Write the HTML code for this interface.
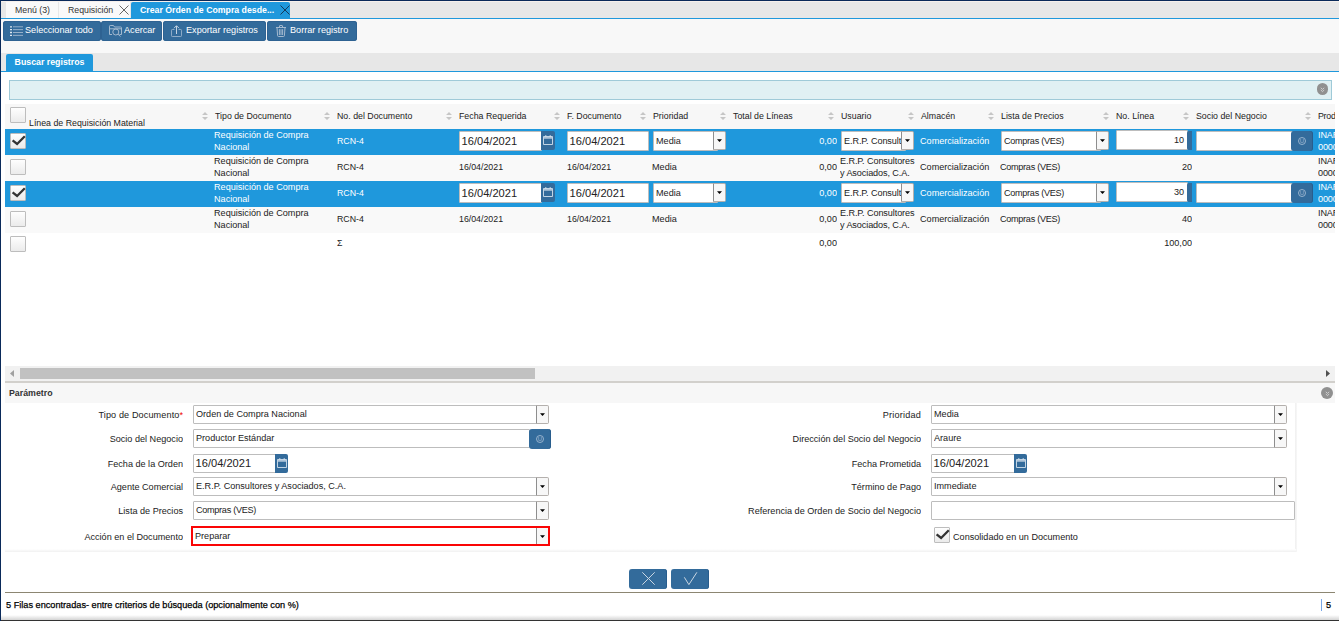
<!DOCTYPE html>
<html lang="es">
<head>
<meta charset="utf-8">
<title>Crear Órden de Compra desde Requisición</title>
<style>
*{box-sizing:border-box;margin:0;padding:0}
html,body{width:1339px;height:621px;overflow:hidden;background:#fff}
body{font-family:"Liberation Sans",sans-serif;font-size:9px;color:#222;position:relative}
div,span{position:absolute;white-space:nowrap}
svg{position:absolute;overflow:visible}
.tab{top:2px;height:16px;line-height:16px;font-size:8.75px;color:#333;background:#f9f9f9}
.btn{top:21px;height:20px;background:#336b9b;border-radius:3px;color:#fff;font-size:9.8px;line-height:19px;box-shadow:inset 0 0 0 1px #2e6292}
.h{top:110px;font-size:8.8px;line-height:12px;color:#222}
.row{left:5px;width:1330px;height:26px}
.sel{background:#1f98dc}
.odd{background:#f9f9f9}
.t{font-size:9.6px;line-height:12px;color:#222;transform:scaleX(.948);transform-origin:0 50%;margin-left:-.7px}
.a{font-size:8.8px;line-height:12px;color:#222}
.w{color:#fff}
.r{text-align:right;transform-origin:100% 50%;margin-left:0}
.cb{left:10px;width:16px;height:16px;background:linear-gradient(#fefefe,#ebebeb);border:1px solid #bdbdbd;border-radius:1px}
.in{background:#fff;border:1px solid #bdbdbd;border-radius:1px;overflow:hidden;color:#222}
.dd{background:#f7f7f7;border:1px solid #b4b0ad;border-left-color:#8e8e8e;border-radius:0 2px 2px 0}
.dd:after,.arr{content:"";position:absolute;left:50%;top:50%;margin:-1.2px 0 0 -2.5px;width:5px;height:2.6px;background:#000;clip-path:polygon(0 0,100% 0,50% 100%)}
.cal{background:#336b9b;border-radius:0 2px 2px 0}
.lbl{font-size:9.6px;line-height:12px;margin-top:.5px;color:#222;text-align:right;transform:scaleX(.948);transform-origin:100% 50%}
.bb{background:#336b9b;border-radius:3px;box-shadow:inset -1px 0 0 #285d8d}
.big{font-size:11.1px;line-height:17px;left:1.6px;top:1px}
.f{font-size:9.6px;line-height:16px;left:2px;top:0;transform:scaleX(.948);transform-origin:0 50%}
.g{left:1.5px}
</style>
</head>
<body>
<div class="" style="left:0px;top:2px;width:1339px;height:16px;background:#e7e7e7"></div>
<div class="" style="left:0px;top:18px;width:1339px;height:1px;background:#1f98dc"></div>
<div class="" style="left:0px;top:19px;width:1339px;height:34px;background:#f8f8f8"></div>
<div class="" style="left:0px;top:53px;width:1339px;height:19px;background:#e7e7e7"></div>
<div class="" style="left:0px;top:71px;width:1339px;height:1px;background:#1f98dc"></div>
<div class="tab" style="left:6px;width:52px;padding-left:9px">Menú (3)</div>
<div class="tab" style="left:59px;width:71px;padding-left:9px">Requisición</div>
<div class="tab" style="left:131px;width:159px;padding-left:9px;background:#1f98dc;color:#fff;font-weight:bold;border-radius:2px 2px 0 0">Crear Órden de Compra desde...</div>
<svg style="left:119px;top:5px" width="10" height="10" viewBox="0 0 10 10"><path d="M0.5 0.5L9.5 9.5M9.5 0.5L0.5 9.5" stroke="#666" stroke-width="1" fill="none"/></svg>
<svg style="left:280px;top:5px" width="10" height="10" viewBox="0 0 10 10"><path d="M0.5 0.5L9.5 9.5M9.5 0.5L0.5 9.5" stroke="#143a5c" stroke-width="1" fill="none"/></svg>
<div class="btn" style="left:3px;width:97.5px"><svg style="left:7px;top:5px" width="13" height="11" viewBox="0 0 13 11"><path d="M0 .8h2M0 3.65h2M0 6.5h2M0 9.35h2" stroke="#dde7f0" stroke-width="1.3"/><path d="M3 .8h10M3 3.65h10M3 6.5h10M3 9.35h10" stroke="#a3b9cf" stroke-width=".9"/></svg><span style="left:22px;top:-.7px;transform:scaleX(.93);transform-origin:0 50%">Seleccionar todo</span></div>
<div class="btn" style="left:101px;width:61px"><svg style="left:8px;top:4px" width="13" height="12" viewBox="0 0 13 12"><path d="M.5 9.5V1.2Q.5 .5 1.2 .5H4.5L5.5 2H11.8Q12.5 2 12.5 2.7V9.5M.5 3.8H12.5M.5 9.5H3M10.5 9.5H12.5" stroke="#a3b9cf" stroke-width="1" fill="none"/><circle cx="6.8" cy="7" r="3" stroke="#a3b9cf" stroke-width="1" fill="none"/><path d="M9 9.2L11.5 11.5" stroke="#a3b9cf" stroke-width="1"/></svg><span style="left:23px;top:-.7px;transform:scaleX(.93);transform-origin:0 50%">Acercar</span></div>
<div class="btn" style="left:163px;width:103px"><svg style="left:8px;top:4px" width="11" height="12" viewBox="0 0 11 12"><path d="M3.5 4.5H1.2Q.5 4.5 .5 5.2V10.8Q.5 11.5 1.2 11.5H9.8Q10.5 11.5 10.5 10.8V5.2Q10.5 4.5 9.8 4.5H7.5" stroke="#8eabc7" stroke-width="1" fill="none"/><path d="M5.5 9V1M3 3.2L5.5 .7L8 3.2" stroke="#c4d3e2" stroke-width="1" fill="none"/></svg><span style="left:23px;top:-.7px;transform:scaleX(.93);transform-origin:0 50%">Exportar registros</span></div>
<div class="btn" style="left:267px;width:90px"><svg style="left:9px;top:4px" width="10" height="12" viewBox="0 0 10 12"><path d="M0 2.5H10M3.5 2.3V1Q3.5 .5 4 .5H6Q6.5 .5 6.5 1V2.3M1 2.5L1.6 10.8Q1.7 11.5 2.4 11.5H7.6Q8.3 11.5 8.4 10.8L9 2.5M3.4 4.2V10M5 4.2V10M6.6 4.2V10" stroke="#a3b9cf" stroke-width="1" fill="none"/></svg><span style="left:23px;top:-.7px;transform:scaleX(.93);transform-origin:0 50%">Borrar registro</span></div>
<div style="left:6px;top:54px;width:87px;height:18px;background:#1f98dc;color:#fff;font-weight:bold;font-size:8.8px;line-height:17px;text-align:center;border-radius:2px 2px 0 0">Buscar registros</div>
<div class="" style="left:9px;top:80px;width:1323px;height:20px;background:#e0f0f3;border:1px solid #9fcad8"></div>
<div style="left:1317px;top:83px;width:11px;height:12px;border-radius:6px;background:#909090"></div>
<svg style="left:1320.0px;top:86.5px" width="5" height="6" viewBox="0 0 5 6"><path d="M.8 .8L2.5 2.4L4.2 .8M.8 3L2.5 4.6L4.2 3" stroke="#d8d8d8" stroke-width=".9" fill="none"/></svg>
<div class="" style="left:5px;top:104px;width:1330px;height:25px;background:#f7f7f7"></div>
<div class="cb" style="top:107px"></div>
<div class="h" style="left:29px;top:117px">Línea de Requisición Material</div>
<svg style="left:202px;top:112px" width="6" height="8" viewBox="0 0 6 8"><path d="M0 3L3 0L6 3ZM0 5L3 8L6 5Z" fill="#c6c6c6"/></svg>
<div class="h" style="left:215px">Tipo de Documento</div>
<svg style="left:324px;top:112px" width="6" height="8" viewBox="0 0 6 8"><path d="M0 3L3 0L6 3ZM0 5L3 8L6 5Z" fill="#c6c6c6"/></svg>
<div class="h" style="left:337px">No. del Documento</div>
<svg style="left:446px;top:112px" width="6" height="8" viewBox="0 0 6 8"><path d="M0 3L3 0L6 3ZM0 5L3 8L6 5Z" fill="#c6c6c6"/></svg>
<div class="h" style="left:459px">Fecha Requerida</div>
<svg style="left:554px;top:112px" width="6" height="8" viewBox="0 0 6 8"><path d="M0 3L3 0L6 3ZM0 5L3 8L6 5Z" fill="#c6c6c6"/></svg>
<div class="h" style="left:567px">F. Documento</div>
<svg style="left:640px;top:112px" width="6" height="8" viewBox="0 0 6 8"><path d="M0 3L3 0L6 3ZM0 5L3 8L6 5Z" fill="#c6c6c6"/></svg>
<div class="h" style="left:653px">Prioridad</div>
<svg style="left:720px;top:112px" width="6" height="8" viewBox="0 0 6 8"><path d="M0 3L3 0L6 3ZM0 5L3 8L6 5Z" fill="#c6c6c6"/></svg>
<div class="h" style="left:733px">Total de Líneas</div>
<svg style="left:828px;top:112px" width="6" height="8" viewBox="0 0 6 8"><path d="M0 3L3 0L6 3ZM0 5L3 8L6 5Z" fill="#c6c6c6"/></svg>
<div class="h" style="left:841px">Usuario</div>
<svg style="left:908px;top:112px" width="6" height="8" viewBox="0 0 6 8"><path d="M0 3L3 0L6 3ZM0 5L3 8L6 5Z" fill="#c6c6c6"/></svg>
<div class="h" style="left:921px">Almacén</div>
<svg style="left:988px;top:112px" width="6" height="8" viewBox="0 0 6 8"><path d="M0 3L3 0L6 3ZM0 5L3 8L6 5Z" fill="#c6c6c6"/></svg>
<div class="h" style="left:1001px">Lista de Precios</div>
<svg style="left:1103px;top:112px" width="6" height="8" viewBox="0 0 6 8"><path d="M0 3L3 0L6 3ZM0 5L3 8L6 5Z" fill="#c6c6c6"/></svg>
<div class="h" style="left:1116px">No. Línea</div>
<svg style="left:1183px;top:112px" width="6" height="8" viewBox="0 0 6 8"><path d="M0 3L3 0L6 3ZM0 5L3 8L6 5Z" fill="#c6c6c6"/></svg>
<div class="h" style="left:1196px">Socio del Negocio</div>
<svg style="left:1305px;top:112px" width="6" height="8" viewBox="0 0 6 8"><path d="M0 3L3 0L6 3ZM0 5L3 8L6 5Z" fill="#c6c6c6"/></svg>
<div class="h" style="left:1318px;width:17px;overflow:hidden;letter-spacing:-.25px">Producto</div>
<div class="row sel" style="top:129px"></div>
<div class="cb" style="top:133px"><svg style="left:.5px;top:1px" width="14" height="11" viewBox="0 0 14 11"><path d="M.6 5.3L5.1 9L12.8 1.3" stroke="#333" stroke-width="2.3" fill="none"/></svg></div>
<div class="t w" style="left:215px;top:128.5px">Requisición de Compra<br>Nacional</div>
<div class="a w" style="left:337px;top:135px">RCN-4</div>
<div class="t w r" style="left:737px;width:100px;top:135px">0,00</div>
<div class="t w" style="left:921px;top:135px">Comercialización</div>
<div style="left:1318px;top:129px;width:17px;height:26px;overflow:hidden"><div class="t w" style="left:0;top:-.5px;margin-left:0;letter-spacing:-.15px">INAR<br>0000</div></div>
<div class="in" style="left:459px;top:131px;width:83px;height:20px;"><span class="big">16/04/2021</span></div>
<div class="cal" style="left:541px;top:131px;width:14px;height:19px"><svg style="left:2px;top:4px" width="10" height="10" viewBox="0 0 10 10"><path d="M.5 1.5H9.5V9.5H.5Z" stroke="#d3e0ec" stroke-width=".9" fill="none"/><path d="M.5 2.9H9.5" stroke="#c3d4e4" stroke-width="1.5"/><path d="M2.8 0V2M7.2 0V2" stroke="#d3e0ec" stroke-width=".9"/></svg></div>
<div class="in" style="left:567px;top:131px;width:82px;height:20px;"><span class="big">16/04/2021</span></div>
<div class="in" style="left:653px;top:131px;width:65px;height:20px;"><span class="f g" style="top:1px">Media</span></div>
<div class="dd" style="left:713px;top:131px;width:13px;height:19px;"></div>
<div class="in" style="left:841px;top:131px;width:65px;height:20px;"><span class="f g" style="top:1px;letter-spacing:-.1px">E.R.P. Consultores y Asociados, C.A.</span></div>
<div class="dd" style="left:901px;top:131px;width:13px;height:19px;"></div>
<div class="in" style="left:1001px;top:131px;width:100px;height:20px;"><span class="f g" style="top:1px;letter-spacing:-.3px">Compras (VES)</span></div>
<div class="dd" style="left:1096px;top:131px;width:13px;height:19px;"></div>
<div class="in" style="left:1116px;top:130px;width:72px;height:20px;"><span class="f r" style="left:auto;right:2px;top:.5px">10</span></div>
<div class="" style="left:1187px;top:131px;width:5px;height:19px;background:#336b9b;border-radius:2px 0 0 2px"></div>
<div class="in" style="left:1196px;top:131px;width:97px;height:20px;"></div>
<div class="bb" style="left:1291px;top:131px;width:22px;height:20px"><svg style="left:7.0px;top:6.0px" width="8" height="8" viewBox="0 0 8 8"><circle cx="4" cy="4" r="3.5" stroke="#a2bad2" stroke-width=".9" fill="none"/><path d="M2.7 2V5.3M5.3 2V5.3M2.7 5.4H5.3" stroke="#93aeca" stroke-width=".7" fill="none"/></svg></div>
<div class="row odd" style="top:155px"></div>
<div class="cb" style="top:159px"></div>
<div class="t" style="left:215px;top:154.5px">Requisición de Compra<br>Nacional</div>
<div class="a" style="left:337px;top:161px">RCN-4</div>
<div class="t r" style="left:737px;width:100px;top:161px">0,00</div>
<div class="t" style="left:921px;top:161px">Comercialización</div>
<div style="left:1318px;top:155px;width:17px;height:26px;overflow:hidden"><div class="t" style="left:0;top:-.5px;margin-left:0;letter-spacing:-.15px">INAR<br>0000</div></div>
<div class="a" style="left:459px;top:161px">16/04/2021</div>
<div class="a" style="left:567px;top:161px">16/04/2021</div>
<div class="t" style="left:653px;top:161px">Media</div>
<div class="t" style="left:841px;top:154.5px;letter-spacing:-.1px">E.R.P. Consultores<br>y Asociados, C.A.</div>
<div class="t" style="left:1001px;top:161px;letter-spacing:-.3px">Compras (VES)</div>
<div class="t r" style="left:1092px;width:100px;top:161px">20</div>
<div class="row sel" style="top:181px"></div>
<div class="cb" style="top:185px"><svg style="left:.5px;top:1px" width="14" height="11" viewBox="0 0 14 11"><path d="M.6 5.3L5.1 9L12.8 1.3" stroke="#333" stroke-width="2.3" fill="none"/></svg></div>
<div class="t w" style="left:215px;top:180.5px">Requisición de Compra<br>Nacional</div>
<div class="a w" style="left:337px;top:187px">RCN-4</div>
<div class="t w r" style="left:737px;width:100px;top:187px">0,00</div>
<div class="t w" style="left:921px;top:187px">Comercialización</div>
<div style="left:1318px;top:181px;width:17px;height:26px;overflow:hidden"><div class="t w" style="left:0;top:-.5px;margin-left:0;letter-spacing:-.15px">INAR<br>0000</div></div>
<div class="in" style="left:459px;top:183px;width:83px;height:20px;"><span class="big">16/04/2021</span></div>
<div class="cal" style="left:541px;top:183px;width:14px;height:19px"><svg style="left:2px;top:4px" width="10" height="10" viewBox="0 0 10 10"><path d="M.5 1.5H9.5V9.5H.5Z" stroke="#d3e0ec" stroke-width=".9" fill="none"/><path d="M.5 2.9H9.5" stroke="#c3d4e4" stroke-width="1.5"/><path d="M2.8 0V2M7.2 0V2" stroke="#d3e0ec" stroke-width=".9"/></svg></div>
<div class="in" style="left:567px;top:183px;width:82px;height:20px;"><span class="big">16/04/2021</span></div>
<div class="in" style="left:653px;top:183px;width:65px;height:20px;"><span class="f g" style="top:1px">Media</span></div>
<div class="dd" style="left:713px;top:183px;width:13px;height:19px;"></div>
<div class="in" style="left:841px;top:183px;width:65px;height:20px;"><span class="f g" style="top:1px;letter-spacing:-.1px">E.R.P. Consultores y Asociados, C.A.</span></div>
<div class="dd" style="left:901px;top:183px;width:13px;height:19px;"></div>
<div class="in" style="left:1001px;top:183px;width:100px;height:20px;"><span class="f g" style="top:1px;letter-spacing:-.3px">Compras (VES)</span></div>
<div class="dd" style="left:1096px;top:183px;width:13px;height:19px;"></div>
<div class="in" style="left:1116px;top:182px;width:72px;height:20px;"><span class="f r" style="left:auto;right:2px;top:.5px">30</span></div>
<div class="" style="left:1187px;top:183px;width:5px;height:19px;background:#336b9b;border-radius:2px 0 0 2px"></div>
<div class="in" style="left:1196px;top:183px;width:97px;height:20px;"></div>
<div class="bb" style="left:1291px;top:183px;width:22px;height:20px"><svg style="left:7.0px;top:6.0px" width="8" height="8" viewBox="0 0 8 8"><circle cx="4" cy="4" r="3.5" stroke="#a2bad2" stroke-width=".9" fill="none"/><path d="M2.7 2V5.3M5.3 2V5.3M2.7 5.4H5.3" stroke="#93aeca" stroke-width=".7" fill="none"/></svg></div>
<div class="row odd" style="top:207px"></div>
<div class="cb" style="top:211px"></div>
<div class="t" style="left:215px;top:206.5px">Requisición de Compra<br>Nacional</div>
<div class="a" style="left:337px;top:213px">RCN-4</div>
<div class="t r" style="left:737px;width:100px;top:213px">0,00</div>
<div class="t" style="left:921px;top:213px">Comercialización</div>
<div style="left:1318px;top:207px;width:17px;height:26px;overflow:hidden"><div class="t" style="left:0;top:-.5px;margin-left:0;letter-spacing:-.15px">INAR<br>0000</div></div>
<div class="a" style="left:459px;top:213px">16/04/2021</div>
<div class="a" style="left:567px;top:213px">16/04/2021</div>
<div class="t" style="left:653px;top:213px">Media</div>
<div class="t" style="left:841px;top:206.5px;letter-spacing:-.1px">E.R.P. Consultores<br>y Asociados, C.A.</div>
<div class="t" style="left:1001px;top:213px;letter-spacing:-.3px">Compras (VES)</div>
<div class="t r" style="left:1092px;width:100px;top:213px">40</div>
<div class="cb" style="top:236px"></div>
<div class="a" style="left:337px;top:237px">Σ</div>
<div class="t r" style="left:737px;width:100px;top:237px">0,00</div>
<div class="t r" style="left:1092px;width:100px;top:237px">100,00</div>
<div class="" style="left:5px;top:366px;width:1330px;height:15px;background:#f1f1f1"></div>
<div class="" style="left:20px;top:368px;width:515px;height:11px;background:#c1c1c1"></div>
<svg style="left:10px;top:370px" width="4" height="7" viewBox="0 0 4 7"><path d="M4 0L0 3.5L4 7Z" fill="#a0a0a0"/></svg>
<svg style="left:1326px;top:370px" width="4" height="7" viewBox="0 0 4 7"><path d="M0 0L4 3.5L0 7Z" fill="#505050"/></svg>
<div class="" style="left:5px;top:381px;width:1330px;height:2px;background:#d2d0cc"></div>
<div class="" style="left:5px;top:383px;width:1330px;height:20px;background:#f7f7f7"></div>
<div style="left:9px;top:387px;font-size:8.8px;font-weight:bold;line-height:12px;color:#333">Parámetro</div>
<div style="left:1321px;top:387px;width:12px;height:12px;border-radius:6px;background:#909090"></div>
<svg style="left:1324.5px;top:390.5px" width="5" height="6" viewBox="0 0 5 6"><path d="M.8 .8L2.5 2.4L4.2 .8M.8 3L2.5 4.6L4.2 3" stroke="#d8d8d8" stroke-width=".9" fill="none"/></svg>
<div class="lbl" style="left:-117px;width:300px;top:408px"><span style="position:static;letter-spacing:.12px">Tipo de Documento</span><span style="position:static;color:#e00">*</span></div>
<div class="in" style="left:193px;top:405px;width:344px;height:19px;"><span class="f" style="top:0">Orden de Compra Nacional</span></div>
<div class="dd" style="left:536px;top:405px;width:13px;height:19px;"></div>
<div class="lbl" style="left:-117px;width:300px;top:432px">Socio del Negocio</div>
<div class="in" style="left:193px;top:429px;width:337px;height:19px;"><span class="f" style="top:0">Productor Estándar</span></div>
<div class="bb" style="left:529px;top:429px;width:22px;height:20px"><svg style="left:7.0px;top:6.0px" width="8" height="8" viewBox="0 0 8 8"><circle cx="4" cy="4" r="3.5" stroke="#a2bad2" stroke-width=".9" fill="none"/><path d="M2.7 2V5.3M5.3 2V5.3M2.7 5.4H5.3" stroke="#93aeca" stroke-width=".7" fill="none"/></svg></div>
<div class="lbl" style="left:-117px;width:300px;top:457px">Fecha de la Orden</div>
<div class="in" style="left:193px;top:454px;width:83px;height:19px;"><span class="big" style="top:0">16/04/2021</span></div>
<div class="cal" style="left:275px;top:454px;width:13px;height:19px"><svg style="left:2px;top:4px" width="10" height="10" viewBox="0 0 10 10"><path d="M.5 1.5H9.5V9.5H.5Z" stroke="#d3e0ec" stroke-width=".9" fill="none"/><path d="M.5 2.9H9.5" stroke="#c3d4e4" stroke-width="1.5"/><path d="M2.8 0V2M7.2 0V2" stroke="#d3e0ec" stroke-width=".9"/></svg></div>
<div class="lbl" style="left:-117px;width:300px;top:480px">Agente Comercial</div>
<div class="in" style="left:193px;top:477px;width:344px;height:19px;"><span class="f" style="top:0">E.R.P. Consultores y Asociados, C.A.</span></div>
<div class="dd" style="left:536px;top:477px;width:13px;height:19px;"></div>
<div class="lbl" style="left:-117px;width:300px;top:504px">Lista de Precios</div>
<div class="in" style="left:193px;top:501px;width:344px;height:19px;"><span class="f" style="top:0"><span style="position:static;letter-spacing:-.3px">Compras (VES)</span></span></div>
<div class="dd" style="left:536px;top:501px;width:13px;height:19px;"></div>
<div class="lbl" style="left:-117px;width:300px;top:530px">Acción en el Documento</div>
<div class="" style="left:191px;top:526px;width:359px;height:20px;background:#fff;border:2px solid #fa0505"><span class="f" style="top:-.5px;left:2px;color:#222">Preparar</span><i style="position:absolute;left:343px;top:0;width:12px;height:16px;background:#f7f7f7;border-left:1px solid #8e8e8e"></i><i class="arr" style="left:347px;top:7.3px;margin:0;height:2.7px"></i></div>
<div class="lbl" style="left:621px;width:300px;top:408px"><span style="position:static;letter-spacing:.22px">Prioridad</span></div>
<div class="in" style="left:931px;top:405px;width:344px;height:19px;"><span class="f" style="top:0">Media</span></div>
<div class="dd" style="left:1274px;top:405px;width:13px;height:19px;"></div>
<div class="lbl" style="left:621px;width:300px;top:432px">Dirección del Socio del Negocio</div>
<div class="in" style="left:931px;top:429px;width:344px;height:19px;"><span class="f" style="top:0">Araure</span></div>
<div class="dd" style="left:1274px;top:429px;width:13px;height:19px;"></div>
<div class="lbl" style="left:621px;width:300px;top:457px">Fecha Prometida</div>
<div class="in" style="left:931px;top:454px;width:84px;height:19px;"><span class="big" style="top:0">16/04/2021</span></div>
<div class="cal" style="left:1014px;top:454px;width:13px;height:19px"><svg style="left:2px;top:4px" width="10" height="10" viewBox="0 0 10 10"><path d="M.5 1.5H9.5V9.5H.5Z" stroke="#d3e0ec" stroke-width=".9" fill="none"/><path d="M.5 2.9H9.5" stroke="#c3d4e4" stroke-width="1.5"/><path d="M2.8 0V2M7.2 0V2" stroke="#d3e0ec" stroke-width=".9"/></svg></div>
<div class="lbl" style="left:621px;width:300px;top:480px">Término de Pago</div>
<div class="in" style="left:931px;top:477px;width:344px;height:19px;"><span class="f" style="top:0">Immediate</span></div>
<div class="dd" style="left:1274px;top:477px;width:13px;height:19px;"></div>
<div class="lbl" style="left:621px;width:300px;top:504px">Referencia de Orden de Socio del Negocio</div>
<div class="in" style="left:931px;top:501px;width:364px;height:19px;"></div>
<div class="cb" style="left:934px;top:527px"><svg style="left:.5px;top:1px" width="14" height="11" viewBox="0 0 14 11"><path d="M.6 5.3L5.1 9L12.8 1.3" stroke="#333" stroke-width="2.3" fill="none"/></svg></div>
<div class="lbl" style="left:953px;top:530px;text-align:left;transform-origin:0 50%">Consolidado en un Documento</div>
<div class="" style="left:1295px;top:403px;width:2px;height:149px;background:linear-gradient(90deg,#efefef,#f8f8f8)"></div>
<div class="" style="left:5px;top:549px;width:1291px;height:3px;background:linear-gradient(#fff,#f1f1f1)"></div>
<div class="bb" style="left:629px;top:569px;width:38px;height:20px;"><svg style="left:13px;top:3px" width="13" height="13" viewBox="0 0 13 13"><path d="M.3 .3L12.7 12.7M12.7 .3L.3 12.7" stroke="#c9d6e3" stroke-width="1" fill="none"/></svg></div>
<div class="bb" style="left:671px;top:569px;width:38px;height:20px;"><svg style="left:13px;top:3px" width="13" height="13" viewBox="0 0 13 13"><path d="M.3 5.3L4.9 12.6L12.9 .3" stroke="#c9d6e3" stroke-width="1" fill="none"/></svg></div>
<div class="" style="left:5px;top:592px;width:1330px;height:1px;background:#8c8672"></div>
<div class="t" style="left:6px;top:598.5px;color:#000;font-size:9.6px;transform:scaleX(.955);margin-left:0;-webkit-text-stroke:.25px #000">5 Filas encontradas- entre criterios de búsqueda (opcionalmente con %)</div>
<div class="" style="left:1321px;top:599px;width:1px;height:12px;background:#7aa7e8"></div>
<div class="t" style="left:1326px;top:598.5px;color:#000;font-size:9.6px;margin-left:0;-webkit-text-stroke:.25px #000">5</div>
<div class="" style="left:0px;top:0px;width:1339px;height:1px;background:#0a2a5a"></div>
<div class="" style="left:0px;top:1px;width:1339px;height:1px;background:#f6f0ec"></div>
<div class="" style="left:0px;top:615px;width:1339px;height:5px;background:linear-gradient(#fff,#d4d4d4)"></div>
<div class="" style="left:0px;top:620px;width:1339px;height:1px;background:#333"></div>
<div class="" style="left:0px;top:0px;width:1px;height:621px;background:#0a2a5a"></div>
</body>
</html>
